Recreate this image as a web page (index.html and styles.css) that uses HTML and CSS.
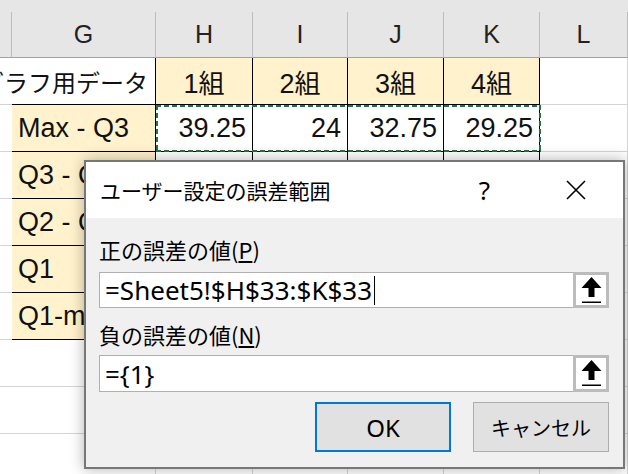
FILE: index.html
```html
<!DOCTYPE html>
<html lang="ja">

<head>
    <meta charset="UTF-8">
    <title>ユーザー設定の誤差範囲</title>
    <link rel="stylesheet" href="styles.css">
</head>

<body>

    <section class="sheet">

        <div class="strip"></div>

        <div class="grid">
            <!-- column headers -->
            <div class="c hd"></div>
            <div class="c hd">G</div>
            <div class="c hd">H</div>
            <div class="c hd">I</div>
            <div class="c hd">J</div>
            <div class="c hd">K</div>
            <div class="c hd">L</div>

            <!-- row 1 -->
            <div class="c clear"></div>
            <div class="c bk over"><span class="jp">グラフ用データ</span></div>
            <div class="c bk yl ctr"><span>1<span class="jp big">組</span></span></div>
            <div class="c bk yl ctr"><span>2<span class="jp big">組</span></span></div>
            <div class="c bk yl ctr"><span>3<span class="jp big">組</span></span></div>
            <div class="c bk yl ctr"><span>4<span class="jp big">組</span></span></div>
            <div class="c"></div>

            <!-- row 2 -->
            <div class="c bl"></div>
            <div class="c bk yl">Max - Q3</div>
            <div class="c bk num">39.25</div>
            <div class="c bk num">24</div>
            <div class="c bk num">32.75</div>
            <div class="c bk num">29.25</div>
            <div class="c"></div>

            <!-- rows 3 to 6, values sit under the dialog -->
            <div class="c bl"></div>
            <div class="c bk yl">Q3 - Q2</div>
            <div class="c bk"></div><div class="c bk"></div><div class="c bk"></div><div class="c bk"></div>
            <div class="c"></div>

            <div class="c bl"></div>
            <div class="c bk yl">Q2 - Q1</div>
            <div class="c bk"></div><div class="c bk"></div><div class="c bk"></div><div class="c bk"></div>
            <div class="c"></div>

            <div class="c bl"></div>
            <div class="c bk yl">Q1</div>
            <div class="c bk"></div><div class="c bk"></div><div class="c bk"></div><div class="c bk"></div>
            <div class="c"></div>

            <div class="c bl"></div>
            <div class="c bk yl">Q1-min</div>
            <div class="c bk"></div><div class="c bk"></div><div class="c bk"></div><div class="c bk"></div>
            <div class="c"></div>

            <!-- empty rows -->
            <div class="c"></div><div class="c"></div><div class="c"></div><div class="c"></div><div class="c"></div><div class="c"></div><div class="c"></div>
            <div class="c"></div><div class="c"></div><div class="c"></div><div class="c"></div><div class="c"></div><div class="c"></div><div class="c"></div>
            <div class="c"></div><div class="c"></div><div class="c"></div><div class="c"></div><div class="c"></div><div class="c"></div><div class="c"></div>
        </div>

        <!-- copy marquee around H2:K2 -->
        <div class="ants"></div>

        <section class="dialog">

            <div class="titlebar">
                <span class="title">ユーザー設定の誤差範囲</span>
                <span class="help">?</span>
                <svg class="close" width="20" height="20" viewBox="0 0 20 20">
                    <path d="M1 1 L19 19 M19 1 L1 19" stroke="#000" stroke-width="1.6" fill="none" />
                </svg>
            </div>

            <div class="body">
                <p class="label">正の誤差の値(<u>P</u>)</p>
                <div class="ref">
                    <div class="field">=Sheet5!$H$33:$K$33<span class="caret"></span></div>
                    <div class="pick">
                        <svg width="21" height="27" viewBox="0 0 21 27">
                            <path d="M10.5 0 L20.5 11 L13.5 11 L13.5 20 L7.5 20 L7.5 11 L0.5 11 Z" fill="#000" />
                            <rect x="1" y="24.5" width="19" height="1.5" fill="#000" />
                        </svg>
                    </div>
                </div>

                <p class="label second">負の誤差の値(<u>N</u>)</p>
                <div class="ref low">
                    <div class="field">={1}</div>
                    <div class="pick">
                        <svg width="21" height="27" viewBox="0 0 21 27">
                            <path d="M10.5 0 L20.5 11 L13.5 11 L13.5 20 L7.5 20 L7.5 11 L0.5 11 Z" fill="#000" />
                            <rect x="1" y="24.5" width="19" height="1.5" fill="#000" />
                        </svg>
                    </div>
                </div>

                <div class="buttons">
                    <button class="btn ok">OK</button>
                    <button class="btn cancel">キャンセル</button>
                </div>
            </div>

        </section>

    </section>

</body>

</html>
```

FILE: styles.css
```css
body {
    margin: 0;
    background-color: white;
    font-family: "Liberation Sans", "Noto Sans CJK JP", sans-serif;
    overflow: hidden;
}

.sheet {
    position: relative;
    width: 628px;
    height: 474px;
    overflow: hidden;
}

.strip {
    height: 12px;
    background-color: #e6e6e6;
}

.grid {
    display: grid;
    grid-template-columns: 12px 144px 97px 95px 96px 96px 88px;
    grid-template-rows: 46px repeat(9, 47px);
}

.c {
    box-sizing: border-box;
    display: flex;
    align-items: center;
    padding: 0 6px;
    border-right: 1px solid #d4d4d4;
    border-bottom: 1px solid #d4d4d4;
    font-size: 27px;
    color: #111;
    white-space: nowrap;
    background-color: white;
}

.hd {
    justify-content: center;
    padding: 0;
    background-color: #e6e6e6;
    border-right-color: #bcbcbc;
    border-bottom-color: #a2a2a2;
    font-size: 25px;
    color: #222;
}

.clear {
    border-right-color: white;
}

.yl {
    background-color: #fff2cc;
}

.bk {
    border-right-color: black;
    border-bottom-color: black;
}

.bl {
    border-right-color: black;
}

.num {
    justify-content: flex-end;
}

.ctr {
    justify-content: center;
}

.over {
    justify-content: flex-end;
    padding-right: 7px;
}

.jp {
    font-family: "Noto Sans CJK JP", sans-serif;
    font-size: 24px;
}

.big {
    font-size: 26px;
}

.ants {
    position: absolute;
    left: 156px;
    top: 105px;
    width: 385px;
    height: 47px;
    background:
        repeating-linear-gradient(90deg, #217346 0 5px, transparent 5px 8px) top / 100% 2px no-repeat,
        repeating-linear-gradient(90deg, #217346 0 5px, transparent 5px 8px) bottom / 100% 2px no-repeat,
        repeating-linear-gradient(180deg, #217346 0 5px, transparent 5px 8px) left / 2px 100% no-repeat,
        repeating-linear-gradient(180deg, #217346 0 5px, transparent 5px 8px) right / 2px 100% no-repeat;
}

/* dialog */

.dialog {
    position: absolute;
    left: 84px;
    top: 160px;
    width: 541px;
    height: 309px;
    box-sizing: border-box;
    border: 2px solid #777;
    background-color: #f0f0f0;
    box-shadow: 0 0 14px rgba(0, 0, 0, 0.3);
    font-family: "Noto Sans", "Noto Sans CJK JP", sans-serif;
    color: black;
}

.titlebar {
    height: 56px;
    display: flex;
    align-items: center;
    padding-left: 14px;
    background-color: white;
}

.title {
    flex: 1;
    font-family: "Noto Sans CJK JP", sans-serif;
    font-size: 21px;
}

.help {
    font-size: 26px;
    margin-right: 76px;
}

.close {
    margin-right: 37px;
}

.body {
    padding: 0 14px 0 13px;
}

.label {
    margin: 16px 0 0;
    height: 30px;
    line-height: 30px;
    font-family: "Noto Sans CJK JP", sans-serif;
    font-size: 22px;
}

.label.second {
    margin-top: 11px;
}

.ref {
    display: flex;
    height: 36px;
    margin-top: 8px;
}

.ref.low {
    height: 37px;
    margin-top: 6px;
}

.field {
    flex: 1;
    display: flex;
    align-items: center;
    box-sizing: border-box;
    padding-left: 5px;
    background-color: white;
    border: 1px solid #b0b0b0;
    border-right: none;
    font-size: 26px;
    white-space: nowrap;
}

.caret {
    display: inline-block;
    width: 1px;
    height: 29px;
    margin-left: 2px;
    background-color: black;
}

.pick {
    width: 36px;
    flex-shrink: 0;
    box-sizing: border-box;
    display: flex;
    align-items: center;
    justify-content: center;
    background-color: white;
    border: 3px solid #bcbcbc;
}

.buttons {
    display: flex;
    justify-content: flex-end;
    gap: 22px;
    margin-top: 10px;
}

.btn {
    width: 136px;
    height: 50px;
    box-sizing: border-box;
    background-color: #e1e1e1;
    border: 1px solid #adadad;
    font-family: "Noto Sans", "Noto Sans CJK JP", sans-serif;
    color: black;
    padding: 0;
}

.ok {
    border: 2px solid #0078d7;
    font-size: 24px;
}

.cancel {
    font-family: "Noto Sans CJK JP", sans-serif;
    font-size: 20px;
}
```
